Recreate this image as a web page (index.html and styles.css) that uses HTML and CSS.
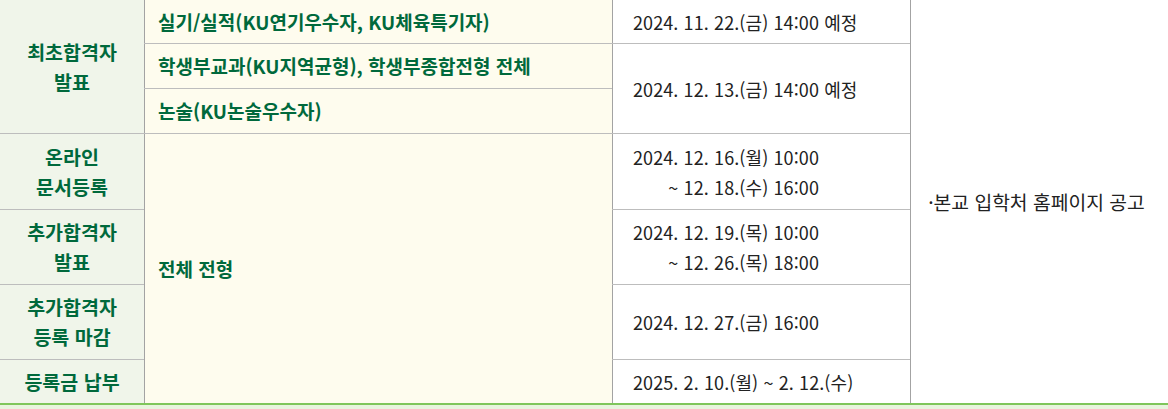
FILE: index.html
```html
<!DOCTYPE html>
<html lang="ko">
<head>
<meta charset="utf-8">
<title>일정</title>
<link rel="stylesheet" href="styles.css">
</head>
<body>
<div class="sched">
  <div class="cell head r1-3">최초합격자<br>발표</div>
  <div class="cell type">실기/실적(KU연기우수자, KU체육특기자)</div>
  <div class="cell date">2024. 11. 22.(금) 14:00 예정</div>
  <div class="cell note">·본교 입학처 홈페이지 공고</div>
  <div class="cell type">학생부교과(KU지역균형), 학생부종합전형 전체</div>
  <div class="cell date r2-3">2024. 12. 13.(금) 14:00 예정</div>
  <div class="cell type">논술(KU논술우수자)</div>
  <div class="cell head">온라인<br>문서등록</div>
  <div class="cell type r4-7">전체 전형</div>
  <div class="cell date"><span class="range"><span>2024. 12. 16.(월) 10:00</span><span>~ 12. 18.(수) 16:00</span></span></div>
  <div class="cell head">추가합격자<br>발표</div>
  <div class="cell date"><span class="range"><span>2024. 12. 19.(목) 10:00</span><span>~ 12. 26.(목) 18:00</span></span></div>
  <div class="cell head">추가합격자<br>등록 마감</div>
  <div class="cell date">2024. 12. 27.(금) 16:00</div>
  <div class="cell head">등록금 납부</div>
  <div class="cell date">2025. 2. 10.(월) ~ 2. 12.(수)</div>
</div>
<div class="after"></div>
</body>
</html>
```
FILE: styles.css
```css
html, body {
  margin: 0;
  padding: 0;
  background: #ffffff;
}
body {
  font-family: "Noto Sans CJK KR", "Noto Sans", sans-serif;
  font-size: 18px;
}
.sched {
  display: grid;
  width: 1168px;
  grid-template-columns: 144px 468px 298px 258px;
  grid-template-rows: 43px 44px 44px 75px 74px 74px 43px;
  row-gap: 1px;
  column-gap: 0;
  background: #bdbdbd;
  border-bottom: 2px solid #7fc65b;
}
.cell {
  display: flex;
  align-items: center;
  line-height: 30px;
}
.head {
  grid-column: 1;
  justify-content: center;
  text-align: center;
  background: #f0f5ea;
  color: #00693c;
  font-weight: 700;
  font-size: 19.5px;
}
.type {
  grid-column: 2;
  background: #fefcee;
  color: #00693c;
  font-weight: 700;
  font-size: 19px;
  padding-left: 13px;
  border-left: 1px solid #a3a3a3;
}
.date {
  grid-column: 3;
  background: #ffffff;
  color: #222222;
  padding-left: 20px;
  letter-spacing: 0.1px;
  border-left: 1px solid #a3a3a3;
}
.note {
  grid-column: 4;
  grid-row: 1 / 8;
  background: #ffffff;
  color: #222222;
  font-size: 19.3px;
  justify-content: center;
  padding-right: 6px;
  border-left: 1px solid #a3a3a3;
}
.r1-3 { grid-row: 1 / 4; }
.r2-3 { grid-row: 2 / 4; }
.r4-7 { grid-row: 4 / 8; }
.range {
  display: inline-flex;
  flex-direction: column;
  align-items: flex-end;
}
.after {
  height: 4px;
  background: #e8f4de;
}
```
